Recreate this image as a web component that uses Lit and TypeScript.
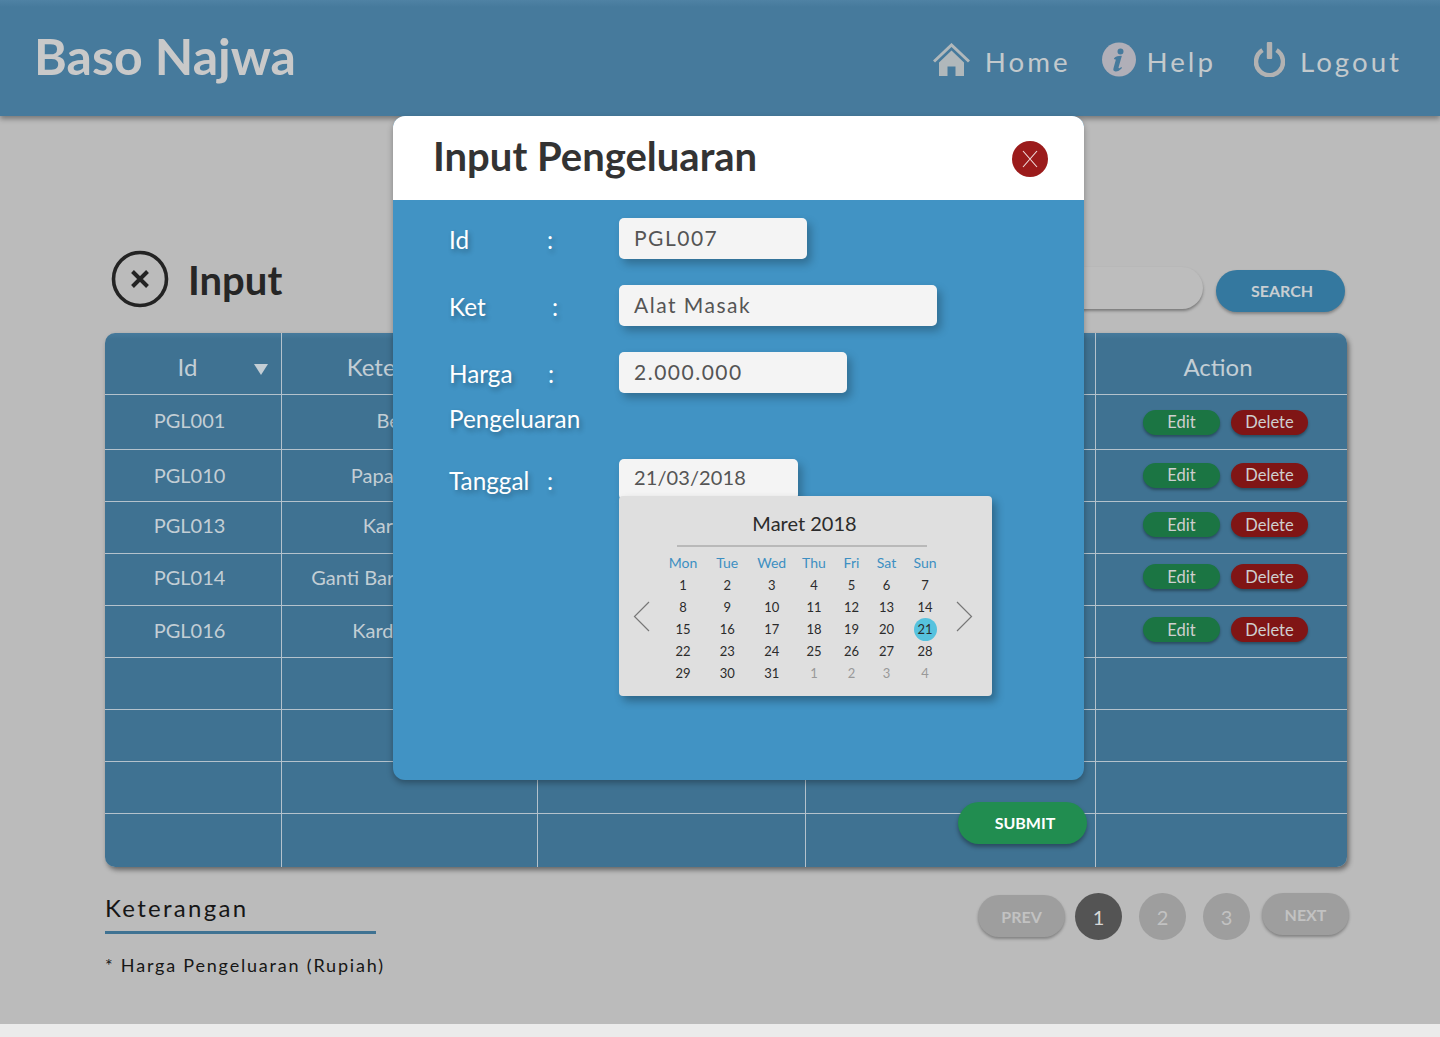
import { LitElement, css, html, svg } from 'lit'
import { customElement } from 'lit/decorators.js'

// lift / btnLift nudge the content of a row upward, the rows are not evenly centred
const rows = [
  { id: 'PGL001', ket: 'Bensin', lift: 4, btnLift: 0 },
  { id: 'PGL010', ket: 'Papan Nama', lift: 2, btnLift: 1 },
  { id: 'PGL013', ket: 'Karet Ban', lift: 6, btnLift: 6 },
  { id: 'PGL014', ket: 'Ganti Barang Kompor', lift: 6, btnLift: 6 },
  { id: 'PGL016', ket: 'Kardus Baru', lift: 4, btnLift: 4 },
  { id: '', ket: '', lift: 0, btnLift: 0 },
  { id: '', ket: '', lift: 0, btnLift: 0 },
  { id: '', ket: '', lift: 0, btnLift: 0 },
  { id: '', ket: '', lift: 0, btnLift: 0 },
]

const fields = [
  { name: 'Id', sub: '', nameWidth: 98, value: 'PGL007', width: 188 },
  { name: 'Ket', sub: '', nameWidth: 103, value: 'Alat Masak', width: 318 },
  { name: 'Harga', sub: 'Pengeluaran', nameWidth: 99, value: '2.000.000', width: 228 },
  { name: 'Tanggal', sub: '', nameWidth: 98, value: '21/03/2018', width: 179 },
]

const weekdays = ['Mon', 'Tue', 'Wed', 'Thu', 'Fri', 'Sat', 'Sun']
const days = [...Array(31).keys()].map((i) => i + 1)

const homeIcon = svg`<path d="M1 18.5 18.5 2 36 18.5" fill="none" stroke="#b0b8bb" stroke-width="3"/><path d="M6 19.5 18.5 7.5 31 19.5V33H22.5V23.5H14.5V33H6Z" fill="#b0b8bb"/>`
const infoIcon = svg`<circle cx="17" cy="17.5" r="17" fill="#b0afb8"/><path d="M18.5 6.5a3 3 0 1 1 0 6 3 3 0 0 1 0-6ZM12 16.2c2-1.6 5-2.5 7.8-2.3l-3.2 11.4c-.3 1.2.6 1.4 2.8-.3l.6 1c-2.4 2.6-4.6 3.7-6.6 3.5-1.9-.2-2.4-1.4-1.9-3.2l2.2-8c.2-.9-.3-1.2-1.5-1.1Z" fill="#467a9c"/>`
const powerIcon = svg`<path d="M8.5 8.2A13.5 13.5 0 1 0 22.5 8.2" fill="none" stroke="#b2b2b2" stroke-width="4.5"/><rect x="12.8" y="0" width="5.4" height="17" rx="1" fill="#b2b2b2"/>`

@customElement('app-root')
export class AppRoot extends LitElement {
  render() {
    return html`
      <div class="page">
        <header>
          <h1>Baso Najwa</h1>
          <nav>
            <a class="home"><svg width="37" height="34" viewBox="0 0 37 34">${homeIcon}</svg>Home</a>
            <a class="help"><svg width="34" height="35" viewBox="0 0 34 35">${infoIcon}</svg>Help</a>
            <a class="logout"><svg width="31" height="35" viewBox="0 0 31 35">${powerIcon}</svg>Logout</a>
          </nav>
        </header>

        <main>
          <div class="toolbar">
            <svg class="input-icon" width="58" height="58" viewBox="0 0 58 58">
              <circle cx="29" cy="29" r="26.5" fill="none" stroke="#232323" stroke-width="3.6" />
              <path d="M21.5 21.5 36.5 36.5M36.5 21.5 21.5 36.5" stroke="#232323" stroke-width="4" />
            </svg>
            <h2>Input</h2>
            <div class="search"></div>
            <button class="search-btn">SEARCH</button>
          </div>

          <div class="table">
            <div class="cell head first">Id<i class="caret"></i></div>
            <div class="cell head second">Keterangan</div>
            <div class="cell head"></div>
            <div class="cell head"></div>
            <div class="cell head">Action</div>
            ${rows.map(
              (r, i) => html`
                <div class="cell ${i === 8 ? 'last' : ''}" style="padding-bottom:${r.lift}px">${r.id}</div>
                <div class="cell ${i === 8 ? 'last' : ''}" style="padding-bottom:${r.lift}px">${r.ket}</div>
                <div class="cell ${i === 8 ? 'last' : ''}"></div>
                <div class="cell ${i === 8 ? 'last' : ''}"></div>
                <div class="cell actions ${i === 8 ? 'last' : ''}" style="padding-bottom:${r.btnLift}px">
                  ${r.id
                    ? html`<button class="edit">Edit</button><button class="delete">Delete</button>`
                    : ''}
                </div>
              `,
            )}
          </div>

          <div class="footer">
            <div>
              <div class="note-title">Keterangan</div>
              <div class="note">* Harga Pengeluaran (Rupiah)</div>
            </div>
            <div class="pager">
              <span class="pill prev">PREV</span>
              <span class="dot active">1</span>
              <span class="dot">2</span>
              <span class="dot">3</span>
              <span class="pill next">NEXT</span>
            </div>
          </div>
        </main>

        <section class="modal">
          <div class="modal-head">
            <h3>Input Pengeluaran</h3>
            <button class="close">
              <svg width="16" height="18" viewBox="0 0 16 18">
                <path d="M1 1 15 17M15 1 1 17" stroke="#f1dede" stroke-width="1.1" fill="none" />
              </svg>
            </button>
          </div>
          <div class="modal-body">
            ${fields.map(
              (f) => html`
                <div class="field">
                  <div class="label">
                    <div class="line">
                      <span style="width:${f.nameWidth}px">${f.name}</span><span>:</span>
                    </div>
                    ${f.sub ? html`<div class="sub">${f.sub}</div>` : ''}
                  </div>
                  <div class="value" style="width:${f.width}px">${f.value}</div>
                </div>
              `,
            )}
            <div class="calendar">
              <div class="month">Maret 2018</div>
              <svg class="arrow left" width="17" height="31" viewBox="0 0 17 31">
                <path d="M16 1 1.5 15.5 16 30" fill="none" stroke="#777" stroke-width="1.2" />
              </svg>
              <svg class="arrow right" width="17" height="31" viewBox="0 0 17 31">
                <path d="M1 1 15.5 15.5 1 30" fill="none" stroke="#777" stroke-width="1.2" />
              </svg>
              <div class="days">
                ${weekdays.map((d) => html`<span class="wd">${d}</span>`)}
                ${days.map(
                  (d) => html`<span><b class=${d === 21 ? 'today' : ''}>${d}</b></span>`,
                )}
                ${[1, 2, 3, 4].map((d) => html`<span class="muted">${d}</span>`)}
              </div>
            </div>
          </div>
          <button class="submit">SUBMIT</button>
        </section>
      </div>
    `
  }

  static styles = css`
    :host {
      display: block;
      height: 1037px;
      background: #ebebeb;
      font-family: Lato, 'Open Sans', sans-serif;
    }

    button {
      border: none;
      padding: 0;
      font-family: inherit;
      cursor: pointer;
    }

    .page {
      position: relative;
      height: 1024px;
      overflow: hidden;
      background: #bbbbbb;
    }

    header {
      display: flex;
      align-items: center;
      height: 116px;
      padding: 0 38px 0 34px;
      box-sizing: border-box;
      background: linear-gradient(#4f82a4, #467a9c 7px);
      box-shadow: 0 3px 5px rgba(0, 0, 0, 0.35);
    }

    h1 {
      margin: 0 0 5px;
      font-size: 50px;
      font-weight: 700;
      color: #c9c9c9;
    }

    nav {
      display: flex;
      align-items: center;
      margin-left: auto;
      padding-top: 6px;
      color: #c3c9cc;
      font-size: 27.7px;
      letter-spacing: 3px;
    }

    nav a {
      display: flex;
      align-items: center;
    }

    nav svg {
      margin: -3px 15px 0 0;
    }

    nav .help {
      margin-left: 31px;
    }

    nav .help svg {
      margin-right: 11px;
    }

    nav .logout {
      margin-left: 38px;
    }

    main {
      padding: 134px 93px 0 105px;
    }

    .toolbar {
      display: flex;
      align-items: flex-start;
      height: 62px;
      padding-right: 2px;
    }

    .input-icon {
      margin-left: 6px;
    }

    h2 {
      margin: 5px 0 0 19px;
      font-size: 40px;
      line-height: 50px;
      font-weight: 700;
      color: #262626;
    }

    .search {
      width: 300px;
      height: 42px;
      margin: 17px 13px 0 auto;
      border-radius: 0 21px 21px 0;
      background: #bdbdbd;
      box-shadow: 0 2px 3px rgba(0, 0, 0, 0.35);
    }

    .search-btn {
      width: 129px;
      height: 42px;
      margin-top: 20px;
      padding: 0 0 2px 3px;
      border-radius: 21px;
      background: #34789f;
      color: #c8ced2;
      font-size: 16px;
      font-weight: 700;
      box-shadow: 0 2px 3px rgba(0, 0, 0, 0.3);
    }

    .table {
      display: grid;
      grid-template-columns: 177px 256px 268px 290px 251px;
      grid-template-rows: 62px 55px 52px 52px 52px 52px 52px 52px 52px 53px;
      margin-top: 21px;
      border-radius: 10px;
      overflow: hidden;
      background: linear-gradient(#467a9c, #3f7292 6px);
      box-shadow: 2px 3px 5px rgba(0, 0, 0, 0.45);
      color: #c3ced5;
      font-size: 20px;
    }

    .cell {
      display: flex;
      align-items: center;
      justify-content: center;
      box-sizing: border-box;
      padding-right: 7px;
      border-right: 1px solid #b4c2cc;
      border-bottom: 1px solid #b4c2cc;
    }

    .cell:nth-child(5n) {
      border-right: none;
    }

    .cell.last {
      border-bottom: none;
    }

    .head {
      position: relative;
      padding-top: 5px;
      font-size: 24px;
    }

    .head.first {
      padding-right: 11px;
    }

    .head.second {
      padding-right: 5px;
    }

    .caret {
      position: absolute;
      left: 149px;
      top: 31px;
      border-left: 7px solid transparent;
      border-right: 7px solid transparent;
      border-top: 11px solid #c3ced5;
    }

    .actions {
      gap: 11px;
      justify-content: flex-start;
      padding-right: 0;
      padding-left: 47px;
    }

    .actions button {
      width: 77px;
      height: 25px;
      border-radius: 13px;
      color: #cfcfcf;
      font-size: 16.5px;
      box-shadow: 0 2px 3px rgba(0, 0, 0, 0.35);
    }

    .edit {
      background: #1b7543;
    }

    .delete {
      background: #801515;
    }

    .footer {
      display: flex;
      justify-content: space-between;
      margin: 26px -2px 0 0;
    }

    .note-title {
      width: 271px;
      padding-bottom: 8px;
      border-bottom: 3px solid #3f7292;
      font-size: 24px;
      line-height: 30px;
      letter-spacing: 2.3px;
      color: #161616;
    }

    .note {
      margin-top: 19px;
      font-size: 18px;
      line-height: 24px;
      letter-spacing: 1.8px;
      color: #161616;
    }

    .pager {
      display: flex;
      align-items: flex-start;
      gap: 17px;
      color: #c2c2c2;
      font-size: 16px;
      font-weight: 700;
    }

    .pill {
      display: flex;
      align-items: center;
      justify-content: center;
      width: 87px;
      height: 42px;
      border-radius: 21px;
      background: #9e9e9e;
      box-shadow: 0 2px 3px rgba(0, 0, 0, 0.3);
    }

    .prev {
      margin: 2px -7px 0 0;
    }

    .next {
      margin-left: -5px;
    }

    .dot {
      display: flex;
      align-items: center;
      justify-content: center;
      width: 47px;
      height: 47px;
      border-radius: 50%;
      background: #9e9e9e;
      font-size: 20px;
      font-weight: 400;
    }

    .dot.active {
      background: #545454;
      color: #d8d8d8;
    }

    .modal {
      position: absolute;
      left: 393px;
      top: 116px;
      width: 691px;
      height: 664px;
      border-radius: 12px;
      background: #4193c4;
      box-shadow: 0 3px 6px rgba(0, 0, 0, 0.3);
    }

    .modal-head {
      display: flex;
      align-items: center;
      justify-content: space-between;
      height: 84px;
      padding: 0 36px 0 40px;
      box-sizing: border-box;
      border-radius: 12px 12px 0 0;
      background: #ffffff;
    }

    h3 {
      margin: 0 0 4px;
      font-size: 40px;
      font-weight: 700;
      color: #333333;
    }

    .close {
      display: flex;
      align-items: center;
      justify-content: center;
      width: 36px;
      height: 36px;
      margin-top: 2px;
      border-radius: 50%;
      background: #9b1b1b;
    }

    .modal-body {
      position: relative;
      display: flex;
      flex-direction: column;
      gap: 25px;
      padding: 18px 0 0 56px;
    }

    .field {
      display: grid;
      grid-template-columns: 170px auto;
      justify-content: start;
      align-items: start;
    }

    .label {
      padding-top: 2px;
      color: #ffffff;
      font-size: 24.3px;
      line-height: 40px;
      text-shadow: 2px 3px 5px rgba(0, 0, 0, 0.3);
    }

    .line {
      display: flex;
    }

    .sub {
      line-height: 50px;
      margin-bottom: -10px;
      white-space: nowrap;
    }

    .value {
      box-sizing: border-box;
      height: 41px;
      padding-left: 15px;
      border-radius: 5px;
      background: #f4f4f4;
      color: #555555;
      font-size: 21px;
      line-height: 40px;
      letter-spacing: 1.5px;
      box-shadow: 4px 5px 8px rgba(0, 0, 0, 0.25);
    }

    .field:nth-child(4) .value {
      font-size: 20px;
      line-height: 36px;
      letter-spacing: 0.1px;
    }

    .calendar {
      position: absolute;
      left: 226px;
      top: 296px;
      width: 373px;
      height: 200px;
      border-radius: 4px;
      background: #dfdfdf;
      color: #2b2b2b;
      box-shadow: 4px 5px 8px rgba(0, 0, 0, 0.3);
    }

    .month {
      box-sizing: border-box;
      width: 250px;
      height: 51px;
      margin-left: 58px;
      padding: 14px 0 0 5px;
      border-bottom: 2px solid #b9b9b9;
      text-align: center;
      font-size: 20px;
      line-height: 26px;
    }

    .arrow {
      position: absolute;
      top: 105px;
    }

    .arrow.left {
      left: 14px;
    }

    .arrow.right {
      right: 19px;
    }

    .days {
      display: grid;
      grid-template-columns: 44px 44.5px 44.5px 40px 35px 35px 42px;
      grid-auto-rows: 22px;
      margin: 5px 0 0 42px;
      font-size: 13px;
      text-align: center;
      line-height: 22px;
    }

    .days b {
      font-weight: 400;
    }

    .days .today {
      display: inline-block;
      width: 23px;
      height: 23px;
      border-radius: 50%;
      background: #56c2de;
      line-height: 23px;
    }

    .wd {
      color: #3d8fc2;
      font-size: 14px;
    }

    .muted {
      color: #999999;
    }

    .submit {
      position: absolute;
      left: 565px;
      top: 686px;
      width: 129px;
      height: 42px;
      padding: 0 0 2px 5px;
      border-radius: 21px;
      background: #218d50;
      color: #ffffff;
      font-size: 16px;
      font-weight: 700;
      box-shadow: 0 3px 4px rgba(0, 0, 0, 0.35);
    }
  `
}
